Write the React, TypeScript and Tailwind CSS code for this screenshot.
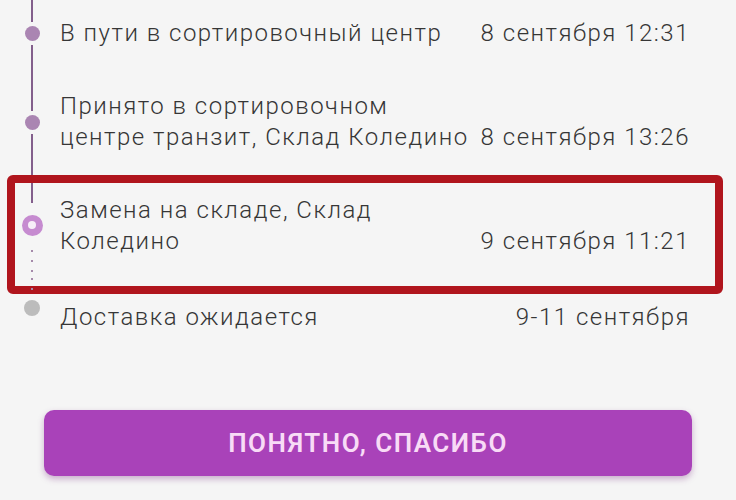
import React from "react";

type Step = {
  lines: string[];
  date: string;
  kind: "done" | "current" | "pending";
  above: "solid" | "dotted" | "none";
  below: "solid" | "dotted" | "none";
};

const steps: Step[] = [
  { lines: ["В пути в сортировочный центр"], date: "8 сентября 12:31", kind: "done", above: "solid", below: "solid" },
  { lines: ["Принято в сортировочном", "центре транзит, Склад Коледино"], date: "8 сентября 13:26", kind: "done", above: "solid", below: "solid" },
  { lines: ["Замена на складе, Склад", "Коледино"], date: "9 сентября 11:21", kind: "current", above: "solid", below: "dotted" },
  { lines: ["Доставка ожидается"], date: "9-11 сентября", kind: "pending", above: "dotted", below: "none" },
];

function Segment({ type, gap }: { type: Step["above"]; gap: string }) {
  if (type === "none") return <div className="flex-1" />;
  if (type === "dotted")
    return (
      <div className={`flex-1 w-[2px] ${gap} bg-[repeating-linear-gradient(to_bottom,#a58aaa_0px,#a58aaa_2px,transparent_2px,transparent_10px)]`} />
    );
  return <div className={`flex-1 w-[2px] ${gap} bg-[#835f8c]`} />;
}

function Marker({ kind }: { kind: Step["kind"] }) {
  if (kind === "current")
    return (
      <div className="w-[21px] h-[21px] rounded-full bg-[#c68bd0] flex items-center justify-center shrink-0">
        <div className="w-[8px] h-[8px] rounded-full bg-[#f7eef8]" />
      </div>
    );
  if (kind === "pending") return <div className="w-[16px] h-[16px] rounded-full bg-[#bcbcbc] shrink-0" />;
  return <div className="w-[15px] h-[15px] rounded-full bg-[#aa85b2] shrink-0" />;
}

function Row({ step, pt, pb }: { step: Step; pt: string; pb: string }) {
  const isCurrent = step.kind === "current";
  return (
    <div className="relative flex">
      <div className="w-[60px] flex flex-col items-center pl-[5px] pr-[1px]">
        <Segment type={step.above} gap={isCurrent ? "mb-[12px]" : "mb-[4px]"} />
        <Marker kind={step.kind} />
        <Segment type={step.below} gap={isCurrent ? "mt-[14px]" : "mt-[4px]"} />
      </div>
      <div className={`flex-1 flex justify-between items-end gap-[4px] pr-[46px] ${pt} ${pb}`}>
        <div className="whitespace-nowrap">
          {step.lines.map((l, i) => (
            <div key={i}>{l}</div>
          ))}
        </div>
        <div className="whitespace-nowrap">{step.date}</div>
      </div>
      {isCurrent && (
        <div className="absolute left-[7px] right-[13px] top-[1px] bottom-[-16px] border-[8px] border-[#b0151d] rounded-[6px] pointer-events-none" />
      )}
    </div>
  );
}

export default function App() {
  return (
    <div
      className="w-[736px] h-[500px] overflow-hidden bg-[#f5f5f5] text-[#363636] text-[24px] leading-[31px] tracking-[1.5px] font-light"
      style={{ fontFamily: "Roboto, 'Noto Sans', sans-serif" }}
    >
      <div className="mt-[-3px]">
        <Row step={steps[0]} pt="pt-[21px]" pb="pb-[21px]" />
        <Row step={steps[1]} pt="pt-[21px]" pb="pb-[21px]" />
        <Row step={steps[2]} pt="pt-[21px]" pb="pb-[21px]" />
        <Row step={steps[3]} pt="pt-[24px]" pb="pb-[0px]" />
      </div>
      <div className="mt-[77px] px-[44px]">
        <button className="w-full h-[66px] rounded-[10px] bg-[#a942b9] shadow-[0_3px_6px_rgba(120,40,130,0.35)] text-[#f8dbf6] text-[26px] font-semibold tracking-[1.5px]">
          ПОНЯТНО, СПАСИБО
        </button>
      </div>
    </div>
  );
}
